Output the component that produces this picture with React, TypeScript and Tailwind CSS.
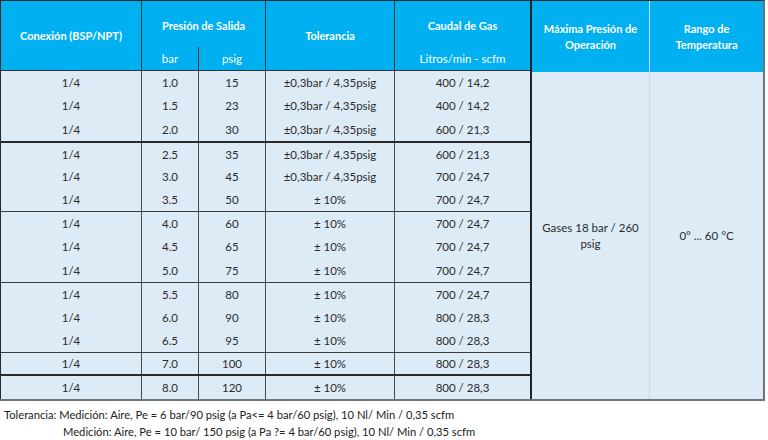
import React from "react";

type Row = { c: string; bar: string; psig: string; tol: string; q: string };

const groups: { rows: Row[]; h: string; border: string }[] = [
  {
    h: "h-[70px]",
    border: "",
    rows: [
      { c: "1/4", bar: "1.0", psig: "15", tol: "±0,3bar / 4,35psig", q: "400 / 14,2" },
      { c: "1/4", bar: "1.5", psig: "23", tol: "±0,3bar / 4,35psig", q: "400 / 14,2" },
      { c: "1/4", bar: "2.0", psig: "30", tol: "±0,3bar / 4,35psig", q: "600 / 21,3" },
    ],
  },
  {
    h: "h-[70px]",
    border: "border-t-2 border-[#2a2a2a]",
    rows: [
      { c: "1/4", bar: "2.5", psig: "35", tol: "±0,3bar / 4,35psig", q: "600 / 21,3" },
      { c: "1/4", bar: "3.0", psig: "45", tol: "±0,3bar / 4,35psig", q: "700 / 24,7" },
      { c: "1/4", bar: "3.5", psig: "50", tol: "± 10%", q: "700 / 24,7" },
    ],
  },
  {
    h: "h-[71px]",
    border: "border-t border-[#3a3a3a]",
    rows: [
      { c: "1/4", bar: "4.0", psig: "60", tol: "± 10%", q: "700 / 24,7" },
      { c: "1/4", bar: "4.5", psig: "65", tol: "± 10%", q: "700 / 24,7" },
      { c: "1/4", bar: "5.0", psig: "75", tol: "± 10%", q: "700 / 24,7" },
    ],
  },
  {
    h: "h-[70px]",
    border: "border-t border-[#3a3a3a]",
    rows: [
      { c: "1/4", bar: "5.5", psig: "80", tol: "± 10%", q: "700 / 24,7" },
      { c: "1/4", bar: "6.0", psig: "90", tol: "± 10%", q: "800 / 28,3" },
      { c: "1/4", bar: "6.5", psig: "95", tol: "± 10%", q: "800 / 28,3" },
    ],
  },
  {
    h: "h-[22px]",
    border: "border-t border-[#3a3a3a]",
    rows: [{ c: "1/4", bar: "7.0", psig: "100", tol: "± 10%", q: "800 / 28,3" }],
  },
  {
    h: "h-[25px]",
    border: "border-t-2 border-[#2a2a2a]",
    rows: [{ c: "1/4", bar: "8.0", psig: "120", tol: "± 10%", q: "800 / 28,3" }],
  },
];

function BodyRow({ r }: { r: Row }) {
  return (
    <div className="flex flex-1 items-center">
      <div className="w-[141px] h-full flex items-center justify-center border-r border-[#4a4a4a]">{r.c}</div>
      <div className="w-[57px] h-full flex items-center justify-center border-r border-[#4a4a4a]">{r.bar}</div>
      <div className="w-[67px] h-full flex items-center justify-center border-r border-[#4a4a4a]">{r.psig}</div>
      <div className="w-[129px] h-full flex items-center justify-center border-r border-[#4a4a4a]">{r.tol}</div>
      <div className="w-[135px] h-full flex items-center justify-center">{r.q}</div>
    </div>
  );
}

export default function App() {
  return (
    <div
      className="w-[768px] h-[440px] bg-white text-[#2b2b2b] text-[11.5px] leading-none"
      style={{ fontFamily: "Lato, 'Open Sans', sans-serif" }}
    >
      <div className="flex w-[765px] border-t border-l border-[#2a2a2a] border-r-2 border-r-[#6f7478]">
        {/* Left block */}
        <div className="w-[531px] flex flex-col border-r-2 border-[#222]">
          {/* Header */}
          <div className="flex h-[70px] bg-[#00b0f0] text-white font-bold text-[11px] border-b border-[#333]">
            <div className="w-[141px] flex items-center justify-center border-r border-[#333]">Conexión (BSP/NPT)</div>
            <div className="w-[124px] flex flex-col border-r border-[#333]">
              <div className="h-[46px] flex items-center justify-center pt-[2px]">Presión de Salida</div>
              <div className="h-[23px] flex text-[11.5px]">
                <div className="w-[57px] flex items-center justify-center border-r border-[#333] font-normal">bar</div>
                <div className="flex-1 flex items-center justify-center font-normal">psig</div>
              </div>
            </div>
            <div className="w-[129px] flex items-center justify-center border-r border-[#333]">Tolerancia</div>
            <div className="w-[135px] flex flex-col">
              <div className="h-[46px] flex items-center justify-center pt-[2px]">Caudal de Gas</div>
              <div className="h-[23px] flex items-center justify-center font-normal text-[11.5px]">Litros/min - scfm</div>
            </div>
          </div>
          {/* Body */}
          <div className="flex flex-col bg-[#ddebf7]">
            {groups.map((g, i) => (
              <div key={i} className={`flex flex-col ${g.h} ${g.border}`}>
                {g.rows.map((r, j) => (
                  <BodyRow key={j} r={r} />
                ))}
              </div>
            ))}
          </div>
        </div>
        {/* Right block */}
        <div className="w-[118px] flex flex-col border-r border-[#c4daee]">
          <div className="h-[71px] bg-[#00b0f0] text-white font-bold text-[11px] flex flex-col items-center justify-center gap-[4px] text-center leading-[12px]">
            <span>Máxima Presión de</span>
            <span>Operación</span>
          </div>
          <div className="flex-1 bg-[#ddebf7] flex flex-col items-center justify-center gap-[4px] leading-[12px]">
            <span>Gases 18 bar / 260</span>
            <span>psig</span>
          </div>
        </div>
        <div className="flex-1 flex flex-col">
          <div className="h-[71px] bg-[#00b0f0] text-white font-bold text-[11px] flex flex-col items-center justify-center gap-[4px] text-center leading-[12px]">
            <span>Rango de</span>
            <span>Temperatura</span>
          </div>
          <div className="flex-1 bg-[#ddebf7] flex items-center justify-center">
            <span>0° ... 60 °C</span>
          </div>
        </div>
      </div>
      <div className="border-t-2 border-[#6f7478] w-[765px]" />
      {/* Footnote */}
      <div className="pl-[4px] pt-[8px] flex flex-col gap-[6px] text-[#222] text-[11.2px]">
        <div>Tolerancia: Medición: Aire, Pe = 6 bar/90 psig (a Pa&lt;= 4 bar/60 psig), 10 Nl/ Min / 0,35 scfm</div>
        <div className="pl-[59px]">Medición: Aire, Pe = 10 bar/ 150 psig (a Pa ?= 4 bar/60 psig), 10 Nl/ Min / 0,35 scfm</div>
      </div>
    </div>
  );
}
